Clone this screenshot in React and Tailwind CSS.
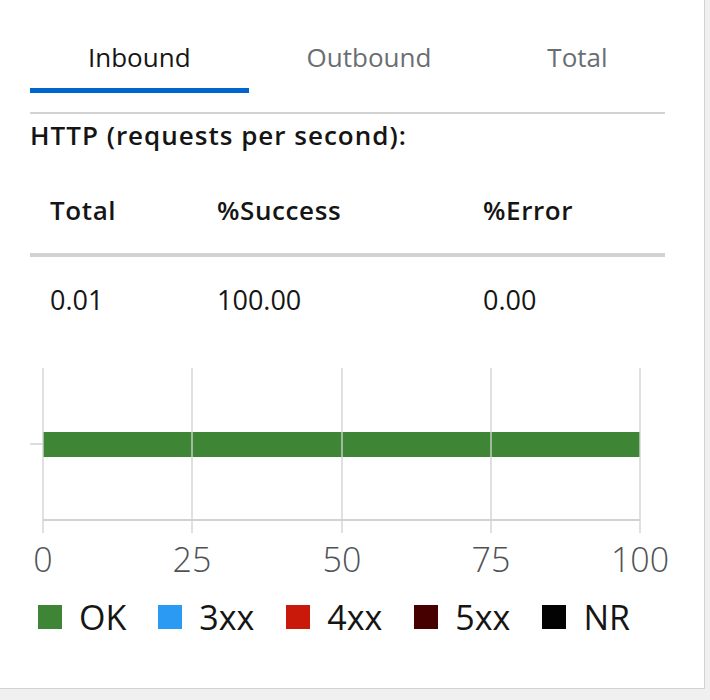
import React from 'react';

const font = { fontFamily: '"Open Sans", "Liberation Sans", sans-serif' };

const tabs = ['Inbound', 'Outbound', 'Total'];

const legend = [
  { label: 'OK', color: 'bg-[#3e8635]' },
  { label: '3xx', color: 'bg-[#2b9af3]' },
  { label: '4xx', color: 'bg-[#c9190b]' },
  { label: '5xx', color: 'bg-[#470000]' },
  { label: 'NR', color: 'bg-[#030303]' },
];

const ticks = [
  { x: 13, label: '0' },
  { x: 162, label: '25' },
  { x: 312, label: '50' },
  { x: 461, label: '75' },
  { x: 610, label: '100' },
];

const Chart = () => (
  <svg width="660" height="240" viewBox="0 0 660 240" className="block">
    {/* bar */}
    <rect x="13" y="82" width="597" height="25" fill="#3e8635" />
    {/* grid */}
    {ticks.map((t) => (
      <line key={t.label} x1={t.x} y1="18" x2={t.x} y2="183" stroke="#d2d2d2" strokeWidth="1.5" opacity="0.9" />
    ))}
    <line x1="13" y1="170" x2="610" y2="170" stroke="#d2d2d2" strokeWidth="2" />
    <line x1="0" y1="94" x2="13" y2="94" stroke="#d2d2d2" strokeWidth="1.5" />
    {ticks.map((t) => (
      <text
        key={t.label}
        x={t.x}
        y="222"
        textAnchor="middle"
        fontSize="34"
        fill="#4f5255"
        fontWeight="300"
        style={font}
      >
        {t.label}
      </text>
    ))}
  </svg>
);

export default function App() {
  return (
    <div className="w-[710px] h-[700px] bg-[#f0f0f0]" style={font}>
      <div className="w-[705px] h-[689px] bg-white border-r border-b border-[#d2d2d2] pt-[42px] pl-[30px]">
        <div className="w-[635px]">
          {/* Tabs */}
          <div className="flex items-end">
            {tabs.map((t, i) => (
              <div
                key={t}
                className={`px-[58px] pb-[16px] border-b-[5px] text-[26px] leading-[30px] ${
                  i === 0 ? 'border-[#0066cc] text-[#151515]' : 'border-transparent text-[#6a6e73]'
                }`}
              >
                {t}
              </div>
            ))}
          </div>
          <div className="mt-[19px] h-[2px] bg-[#d2d2d2]"></div>

          <h3 className="mt-[6px] text-[26px] leading-[30px] tracking-[1px] font-semibold text-[#151515]">
            HTTP (requests per second):
          </h3>

          {/* Table */}
          <div className="mt-[45px] grid grid-cols-[167px_266px_1fr] pl-[20px] pb-[28px] border-b-4 border-[#d2d2d2] text-[26px] leading-[30px] tracking-[0.6px] font-semibold text-[#151515]">
            <div>Total</div>
            <div>%Success</div>
            <div>%Error</div>
          </div>
          <div className="pt-[28px] grid grid-cols-[167px_266px_1fr] pl-[20px] text-[27px] leading-[30px] text-[#151515]">
            <div>0.01</div>
            <div>100.00</div>
            <div>0.00</div>
          </div>
        </div>

        <div className="mt-[35px]">
          <Chart />
        </div>

        {/* Legend */}
        <div className="mt-[12px] ml-[8px] flex items-center gap-[32px]">
          {legend.map((l) => (
            <div key={l.label} className="flex items-center gap-[17px]">
              <span className={`w-[24px] h-[24px] ${l.color}`}></span>
              <span className="text-[34px] leading-[30px] text-[#151515]">{l.label}</span>
            </div>
          ))}
        </div>
      </div>
    </div>
  );
}
